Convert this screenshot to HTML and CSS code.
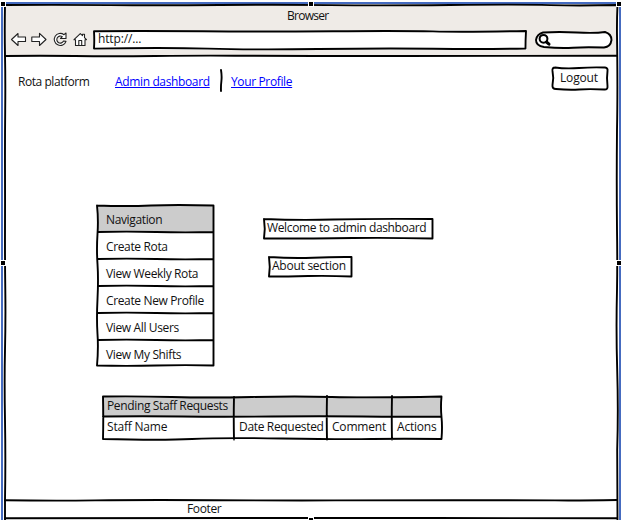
FILE: index.html
```html
<!DOCTYPE html>
<html lang="en">
<head>
<meta charset="utf-8">
<title>Rota platform</title>
<link rel="stylesheet" href="styles.css">
</head>
<body>
<div class="window">
  <header class="chrome">
    <div class="title"><span class="t-browser">Browser</span></div>
    <div class="toolbar">
      <svg class="tools" width="82" height="20" viewBox="0 0 82 20">
        <path d="M1.500 9.500 L8 3.500 V7 H15.500 V11.500 H8 V15.500 Z"/>
        <path d="M36 9.500 L29.500 3.300 V7 H21.800 V11.500 H29.500 V15.500 Z"/>
        <path d="M54 4.700 L56 3 V8.500 H50.500 L52.300 6.700 A3.500 3.500 0 1 0 53.500 11 L56 11.300 A6 6 0 1 1 54 4.700 Z"/>
        <path d="M64 9.700 L70.300 3.700 L72.500 5.700 V4.200 H74.500 V7.700 L76.500 9.700 H75 V15.500 H65.500 V9.700 Z M68.800 15.500 V10.500 H71.700 V15.500"/>
      </svg>
      <div class="url"><svg class="sketch" width="434" height="20" viewBox="0 0 434 20"><path d="M1 1.200 Q50 .8 110 1.300 T240 1.200 T340 1.400 T433 1 Q432.500 10 432.500 18.500 Q390 19.300 340 18.700 T225 19 T115 18.600 T1 18.600 Q1.500 10 1 1.200"/></svg><span class="t-http">http://...</span></div>
      <div class="search"><svg class="sketch" width="78" height="18" viewBox="0 0 78 18"><path class="white" d="M8 1.500 Q24 .6 42 1.500 T70 1 Q76.500 3 76.500 9 Q75.500 16 69 16.500 Q50 15.800 38 16.700 T9 16 Q1 15 1 9 Q2 3 8 1.500"/><circle cx="8.500" cy="7.800" r="3.900"/><path class="handle-line" d="M11.500 11 L14 13.200"/></svg></div>
    </div>
    <svg class="sketch rule-head" width="612" height="4" viewBox="0 0 612 4"><path d="M0 2 Q35 1.400 70 2 T150 2 T230 1.700 T310 2 T400 2 T500 1.900 T612 1.800"/></svg>
  </header>
  <nav class="topnav">
    <span class="brand">Rota platform</span>
    <a class="admin" href="#">Admin dashboard</a>
    <svg class="separator" width="4" height="24" viewBox="0 0 4 24"><path d="M2 1 Q3 7 2.400 12 T2 22"/></svg>
    <a class="profile" href="#">Your Profile</a>
    <button class="logout"><svg class="sketch" width="58" height="25" viewBox="0 0 58 25"><path d="M4 1.500 Q15 3 28 2 T54 1.500 Q57 2 56.500 5 Q55.500 12 56.500 20 Q57 24 53 23.500 Q38 22.800 28 23.500 T5 23 Q1 23 1.500 19 Q3 12 1.500 5 Q1 1.500 4 1.500"/></svg><span>Logout</span></button>
  </nav>
  <main>
    <div class="upper">
      <div class="menu">
        <svg class="sketch" width="119" height="163" viewBox="0 0 119 163"><path d="M1 1.500 Q30 2.500 55 1.500 T117.500 1.500 V161.500 Q90 160.800 60 161.500 T1 161.500 Q2.500 145 1.500 130 T1.500 95 T1.500 60 T1.500 30 T1 1.500 M2 28 Q30 27.200 60 28 T117.500 28 M2 55 Q30 54.200 60 55 T117.500 55 M2 82 Q30 81.200 60 82 T117.500 82 M2 109 Q30 108.200 60 109 T117.500 109 M2 136 Q30 135.200 60 136 T117.500 136"/></svg>
        <div class="item head"><span>Navigation</span></div>
        <div class="item"><span>Create Rota</span></div>
        <div class="item"><span>View Weekly Rota</span></div>
        <div class="item"><span>Create New Profile</span></div>
        <div class="item"><span>View All Users</span></div>
        <div class="item"><span>View My Shifts</span></div>
      </div>
      <div class="notes">
        <div class="note welcome"><svg class="sketch" width="171" height="22" viewBox="0 0 171 22"><path d="M1 1 Q35 2.400 70 1.500 T169.500 1 V20.500 Q125 19.500 90 20 T1 20.500 Q2.500 11 1 1"/></svg><span>Welcome to admin dashboard</span></div>
        <div class="note about"><svg class="sketch" width="85" height="22" viewBox="0 0 85 22"><path d="M1 1 Q25 2.600 45 1.700 T83.500 1 V20.500 Q60 19.500 40 20 T1 20.500 Q2.500 11 1 1"/></svg><span>About section</span></div>
      </div>
    </div>
    <div class="requests">
      <svg class="sketch" width="342" height="46" viewBox="0 0 342 46"><path d="M1 1.500 Q35 1 70 2 T150 2 T230 2 T339.500 1.500 Q338.500 12 339.500 22 T339.500 44 Q300 43.500 270 44 T180 43.500 T90 44 T1 44 Q1.500 23 1 1.500 M1 21.500 Q40 21 80 21.500 T170 21.500 T260 21.500 T339 21.500 M132 2 Q131.500 23 132 44.500 M225 1 Q224.500 23 225 44.500 M290 1 Q289.500 23 290 44.500"/></svg>
      <div class="cell shaded"><span>Pending Staff Requests</span></div><div class="cell shaded"></div><div class="cell shaded"></div><div class="cell shaded"></div>
      <div class="cell"><span>Staff Name</span></div><div class="cell"><span class="date">Date Requested</span></div><div class="cell"><span>Comment</span></div><div class="cell"><span>Actions</span></div>
    </div>
  </main>
  <footer><svg class="sketch" width="612" height="20" viewBox="0 0 612 20"><path d="M0 1.200 Q45 2 90 1.400 T210 1.200 T330 1.400 T450 1.200 T550 1.400 T612 1 M0 19.300 Q120 19 240 19 T430 19 T612 19.300"/></svg><span>Footer</span></footer>
  <svg class="sketch outline" width="621" height="520" viewBox="0 0 621 520"><path d="M5 5 Q60 4.700 110 5.100 T220 5 T330 5.100 T450 5 T550 5.100 T617 5 M5 5 Q4.500 30 5 55 T5.200 110 T5 170 T5 230 T5.300 290 T5 350 T5 420 T5 500 V520 M617.500 5 Q616.800 20 617 35 Q617.800 90 617 130 Q616.500 180 617 230 Q617.500 260 617 290 Q616 330 617.200 370 T617.200 450 L617.500 520"/></svg>
  <i class="grip top left"></i><i class="grip top center"></i><i class="grip top right"></i><i class="grip middle left"></i><i class="grip middle right"></i><i class="grip bottom center"></i>
</div>
</body>
</html>
```
FILE: styles.css
```css
* { box-sizing: border-box; }
body { margin: 0; font: 12px/16px "Open Sans", sans-serif; letter-spacing: -.36px; color: #111; background: #fff; overflow: hidden; }
.window { position: relative; width: 621px; height: 520px; padding: 4px 4px 0 5px; display: flex; flex-direction: column; }
.window::before { content: ""; position: absolute; left: 1px; right: 0; top: 2px; height: 518px; border: solid #456bc0; border-width: 2px 2px 0; }
span, a { white-space: nowrap; }
.sketch { position: absolute; top: 0; left: 0; overflow: visible; z-index: 1; pointer-events: none; }
.sketch path, .separator path { fill: none; stroke: #000; stroke-width: 1.9; stroke-linejoin: round; stroke-linecap: round; }
.chrome { position: relative; height: 52px; background: #efebe7; }
.title { height: 26px; padding: 4px 0 0 282px; }
.t-browser { letter-spacing: -.75px; }
.t-http { letter-spacing: -.15px; }
.toolbar { display: flex; padding-left: 5px; height: 20px; }
.tools { width: 82px; margin-right: 1px; }
.tools path { fill: #fff; stroke: #222; stroke-width: 1.1; stroke-linejoin: round; }
.url { position: relative; width: 434px; height: 20px; padding: 1px 0 0 5px; background: #fff; }
.search { position: relative; width: 78px; height: 18px; margin: 1px 0 0 8px; }
.search .sketch .white { fill: #fff; }
.search circle { fill: #fff; stroke: #000; stroke-width: 2; }
.search .sketch .handle-line { stroke-width: 3; }
.rule-head { top: 50px; }
.topnav { display: flex; height: 50px; padding: 18px 0 0 13px; }
.brand { width: 97px; letter-spacing: -.45px; }
.topnav a { color: #00f; text-decoration: underline; text-underline-offset: 1px; text-decoration-skip-ink: none; height: 16px; }
.admin { width: 105px; }
.separator { margin: -5px 8px 0 -1px; }
.profile { width: 62px; }
.logout { position: relative; width: 58px; height: 25px; margin: -8px 0 0 258px; padding: 0 0 1px 9px; border: 0; background: none; font: inherit; letter-spacing: -.15px; color: inherit; text-align: left; }
main { height: 393px; padding: 98px 0 0 91px; }
.upper { display: flex; }
.menu { position: relative; width: 118px; height: 163px; padding: 1px 0; }
.item { height: 27px; padding: 7px 0 0 10px; }
.menu .head { background: #ccc; margin-left: 1px; padding-left: 9px; }
.notes { padding: 14px 0 0 49px; }
.note { position: relative; height: 22px; padding: 2px 0 0 4px; }
.welcome { width: 171px; }
.about { width: 85px; margin: 16px 0 0 5px; letter-spacing: -.25px; }
.requests { position: relative; width: 341px; height: 46px; margin: 28px 0 0 6px; display: grid; grid-template-columns: 132px 93px 65px 50px; grid-template-rows: 21px 22px; padding-top: 1px; }
.cell { padding: 2px 0 0 5px; letter-spacing: -.2px; }
.cell.shaded { background: #ccc; letter-spacing: -.36px; }
.cell .date { letter-spacing: -.33px; }
footer { position: relative; height: 21px; padding: 2px 0 0 182px; }
.grip { position: absolute; z-index: 3; width: 6px; height: 6px; background: #000; border: 1px solid #fff; }
.grip.top { top: 1px; }
.grip.left { left: 0; }
.grip.right { right: -1px; }
.grip.center { left: 308px; }
.grip.middle { top: 260px; }
.grip.bottom { top: 517px; }
```
